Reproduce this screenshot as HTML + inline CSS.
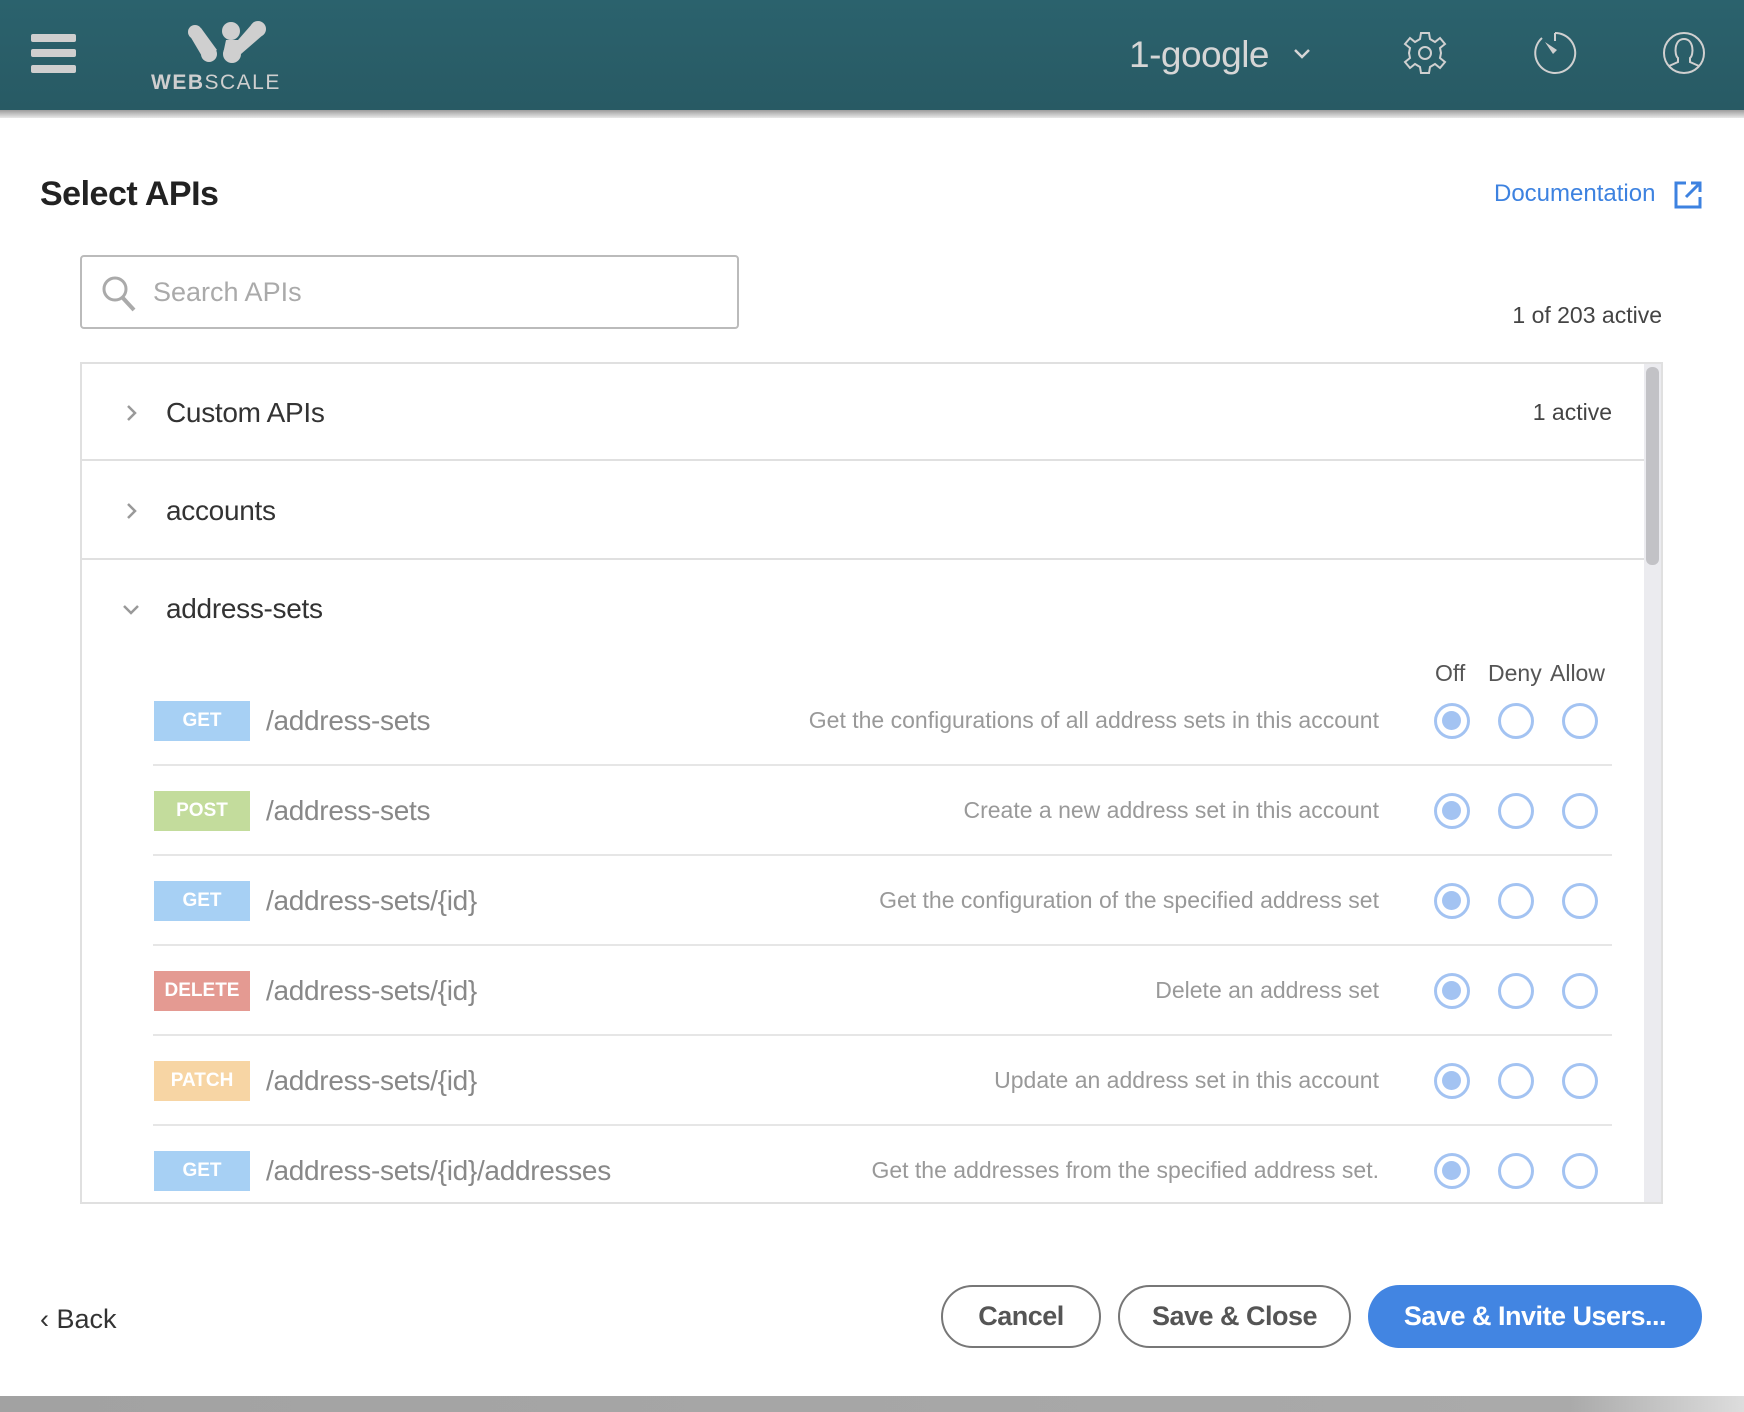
<!DOCTYPE html>
<html><head><meta charset="utf-8"><style>
*{box-sizing:border-box;margin:0;padding:0}
body{width:1744px;height:1412px;position:relative;background:#fff;font-family:"Liberation Sans",sans-serif;overflow:hidden}
.abs{position:absolute}
.hdr{left:0;top:0;width:1744px;height:110px;background:linear-gradient(#2b626d,#285a64)}
.shadow{left:0;top:110px;width:1744px;height:8px;background:linear-gradient(#9c9c9c,#e8e8e8)}
.t{white-space:nowrap;line-height:1}
.badge{width:96px;height:40px;color:#fff;font-weight:bold;font-size:19px;text-align:center;line-height:40px}
.radio{width:36px;height:36px;border:3.5px solid #a3c3f2;border-radius:50%}
.radio.on::after{content:"";position:absolute;left:5px;top:5px;width:19px;height:19px;border-radius:50%;background:#a3c3f2}
.sep{height:2px;background:#e6e6e6;left:153px;width:1459px}
.btn{border-radius:32px;font-size:27px;font-weight:bold;text-align:center;color:#555;letter-spacing:-0.5px}
</style></head><body>
<div class="abs hdr"></div>
<div class="abs shadow"></div>
<div class="abs" style="left:31px;top:34px;width:45px;height:8px;background:#cfcfcf;border-radius:2px"></div>
<div class="abs" style="left:31px;top:49px;width:45px;height:8px;background:#cfcfcf;border-radius:2px"></div>
<div class="abs" style="left:31px;top:65px;width:45px;height:8px;background:#cfcfcf;border-radius:2px"></div>
<svg class="abs" style="left:186px;top:20px" width="84" height="46" viewBox="0 0 84 46">
<g fill="#cfcfcf"><circle cx="9" cy="12" r="7"/><circle cx="45" cy="11" r="9"/><circle cx="72" cy="9" r="8"/>
<circle cx="23" cy="34" r="8"/><circle cx="46" cy="34" r="9"/>
<path d="M4 16 L15 8 L31 30 L17 38Z"/><path d="M37 34 L40 20 L52 20 L66 4 L78 14 L55 34Z"/></g></svg>
<div class="abs t" style="left:151px;top:72px;font-size:21px;color:#cfcfcf;letter-spacing:1.5px"><b>WEB</b>SCALE</div>
<div class="abs t" style="left:1129px;top:36px;font-size:37px;color:#d6d6d6;letter-spacing:-0.5px">1-google</div>
<svg class="abs" style="left:1293px;top:48px" width="18" height="12"><path d="M2 2 L9 9 L16 2" stroke="#d6d6d6" stroke-width="2.5" fill="none"/></svg>
<svg class="abs" style="left:1403px;top:31px" width="44" height="44" viewBox="-22 -22 44 44"><g fill="none" stroke="#d0d0d0" stroke-width="2">
<path d="M-4 -20 L4 -20 L5 -14 L10 -11 L15 -15 L20 -9 L15 -5 L16 0 L15 5 L20 9 L15 15 L10 11 L5 14 L4 20 L-4 20 L-5 14 L-10 11 L-15 15 L-20 9 L-15 5 L-16 0 L-15 -5 L-20 -9 L-15 -15 L-10 -11 L-5 -14Z"/><circle r="6"/></g></svg>
<svg class="abs" style="left:1533px;top:31px" width="44" height="44" viewBox="-22 -22 44 44"><g fill="none" stroke="#d0d0d0" stroke-width="2">
<path d="M0 -20 A20 20 0 1 1 -13 -15"/><path d="M0 -20 V-12"/></g><path d="M-10 -11 L2 -3 L-2 1Z" fill="#d0d0d0"/></svg>
<svg class="abs" style="left:1662px;top:31px" width="44" height="44" viewBox="-22 -22 44 44"><g fill="none" stroke="#d0d0d0" stroke-width="2">
<circle r="20"/><path d="M-15 13 L-6 9 L-6 5 C-10 2 -10 -14 0 -14 C10 -14 10 2 6 5 L6 9 L15 13"/></g></svg>

<div class="abs t" style="left:40px;top:177px;font-size:34px;font-weight:bold;color:#222;letter-spacing:-0.5px">Select APIs</div>
<div class="abs t" style="left:1494px;top:182px;font-size:24px;color:#3d82e0">Documentation</div>
<svg class="abs" style="left:1673px;top:180px" width="30" height="30" viewBox="0 0 30 30"><g fill="none" stroke="#3d82e0" stroke-width="3"><path d="M13 3 H3 V27 H27 V17"/><path d="M13 17 L27 3 M18 3 H27 V12"/></g></svg>

<div class="abs" style="left:80px;top:255px;width:659px;height:74px;border:2px solid #bbb;border-radius:4px"></div>
<svg class="abs" style="left:100px;top:274px" width="40" height="40"><circle cx="15" cy="15" r="11" fill="none" stroke="#aaa" stroke-width="3"/><path d="M22 23 L34 36" stroke="#aaa" stroke-width="4"/></svg>
<div class="abs t" style="left:153px;top:279px;font-size:27px;color:#aaa">Search APIs</div>
<div class="abs t" style="left:1462px;top:304px;width:200px;text-align:right;font-size:23px;color:#444">1 of 203 active</div>

<div class="abs" style="left:80px;top:362px;width:1583px;height:842px;border:2px solid #e0e0e0"></div>
<div class="abs" style="left:1644px;top:364px;width:17px;height:838px;background:#ebebef"></div>
<div class="abs" style="left:1646px;top:367px;width:13px;height:198px;background:#c2c2c6;border-radius:6px"></div>
<div class="abs" style="left:82px;top:459px;width:1562px;height:2px;background:#e0e0e0"></div>
<div class="abs" style="left:82px;top:558px;width:1562px;height:2px;background:#e0e0e0"></div>
<svg class="abs" style="left:125px;top:404px" width="14" height="18"><path d="M3 2 L10 9 L3 16" stroke="#999" stroke-width="2.5" fill="none"/></svg>
<svg class="abs" style="left:125px;top:502px" width="14" height="18"><path d="M3 2 L10 9 L3 16" stroke="#999" stroke-width="2.5" fill="none"/></svg>
<svg class="abs" style="left:122px;top:603px" width="18" height="14"><path d="M2 3 L9 10 L16 3" stroke="#999" stroke-width="2.5" fill="none"/></svg>
<div class="abs t" style="left:166px;top:399px;font-size:28px;color:#333;letter-spacing:-0.3px">Custom APIs</div>
<div class="abs t" style="left:1412px;top:401px;width:200px;text-align:right;font-size:23px;color:#444">1 active</div>
<div class="abs t" style="left:166px;top:497px;font-size:28px;color:#333;letter-spacing:-0.3px">accounts</div>
<div class="abs t" style="left:166px;top:595px;font-size:28px;color:#333;letter-spacing:-0.3px">address-sets</div>
<div class="abs t" style="left:1435px;top:662px;font-size:23px;color:#555">Off</div>
<div class="abs t" style="left:1488px;top:662px;font-size:23px;color:#555">Deny</div>
<div class="abs t" style="left:1550px;top:662px;font-size:23px;color:#555">Allow</div>

<div class="abs badge" style="left:154px;top:701px;background:#a7d0f4">GET</div>
<div class="abs t" style="left:266px;top:707px;font-size:28px;color:#888;letter-spacing:-0.3px">/address-sets</div>
<div class="abs t" style="left:679px;top:709px;width:700px;text-align:right;font-size:23px;color:#999">Get the configurations of all address sets in this account</div>
<div class="abs sep" style="top:764px"></div>
<div class="abs badge" style="left:154px;top:791px;background:#c3dc9c">POST</div>
<div class="abs t" style="left:266px;top:797px;font-size:28px;color:#888;letter-spacing:-0.3px">/address-sets</div>
<div class="abs t" style="left:679px;top:799px;width:700px;text-align:right;font-size:23px;color:#999">Create a new address set in this account</div>
<div class="abs sep" style="top:854px"></div>
<div class="abs badge" style="left:154px;top:881px;background:#a7d0f4">GET</div>
<div class="abs t" style="left:266px;top:887px;font-size:28px;color:#888;letter-spacing:-0.3px">/address-sets/{id}</div>
<div class="abs t" style="left:679px;top:889px;width:700px;text-align:right;font-size:23px;color:#999">Get the configuration of the specified address set</div>
<div class="abs sep" style="top:944px"></div>
<div class="abs badge" style="left:154px;top:971px;background:#e49a92">DELETE</div>
<div class="abs t" style="left:266px;top:977px;font-size:28px;color:#888;letter-spacing:-0.3px">/address-sets/{id}</div>
<div class="abs t" style="left:679px;top:979px;width:700px;text-align:right;font-size:23px;color:#999">Delete an address set</div>
<div class="abs sep" style="top:1034px"></div>
<div class="abs badge" style="left:154px;top:1061px;background:#f7d5a4">PATCH</div>
<div class="abs t" style="left:266px;top:1067px;font-size:28px;color:#888;letter-spacing:-0.3px">/address-sets/{id}</div>
<div class="abs t" style="left:679px;top:1069px;width:700px;text-align:right;font-size:23px;color:#999">Update an address set in this account</div>
<div class="abs sep" style="top:1124px"></div>
<div class="abs badge" style="left:154px;top:1151px;background:#a7d0f4">GET</div>
<div class="abs t" style="left:266px;top:1157px;font-size:28px;color:#888;letter-spacing:-0.3px">/address-sets/{id}/addresses</div>
<div class="abs t" style="left:679px;top:1159px;width:700px;text-align:right;font-size:23px;color:#999">Get the addresses from the specified address set.</div>

<div class="abs radio on" style="left:1434px;top:703px"></div><div class="abs radio" style="left:1498px;top:703px"></div><div class="abs radio" style="left:1562px;top:703px"></div>
<div class="abs radio on" style="left:1434px;top:793px"></div><div class="abs radio" style="left:1498px;top:793px"></div><div class="abs radio" style="left:1562px;top:793px"></div>
<div class="abs radio on" style="left:1434px;top:883px"></div><div class="abs radio" style="left:1498px;top:883px"></div><div class="abs radio" style="left:1562px;top:883px"></div>
<div class="abs radio on" style="left:1434px;top:973px"></div><div class="abs radio" style="left:1498px;top:973px"></div><div class="abs radio" style="left:1562px;top:973px"></div>
<div class="abs radio on" style="left:1434px;top:1063px"></div><div class="abs radio" style="left:1498px;top:1063px"></div><div class="abs radio" style="left:1562px;top:1063px"></div>
<div class="abs radio on" style="left:1434px;top:1153px"></div><div class="abs radio" style="left:1498px;top:1153px"></div><div class="abs radio" style="left:1562px;top:1153px"></div>

<div class="abs t" style="left:40px;top:1306px;font-size:27px;color:#333">‹ Back</div>
<div class="abs btn" style="left:941px;top:1285px;width:160px;height:63px;border:2px solid #777;line-height:59px">Cancel</div>
<div class="abs btn" style="left:1118px;top:1285px;width:233px;height:63px;border:2px solid #777;line-height:59px">Save &amp; Close</div>
<div class="abs btn" style="left:1368px;top:1285px;width:334px;height:63px;background:#4285e2;color:#fff;line-height:63px">Save &amp; Invite Users...</div>
<div class="abs" style="left:0;top:1396px;width:1744px;height:16px;background:linear-gradient(90deg,#a2a2a2,#aaa 90%,#ddd)"></div>
</body></html>
